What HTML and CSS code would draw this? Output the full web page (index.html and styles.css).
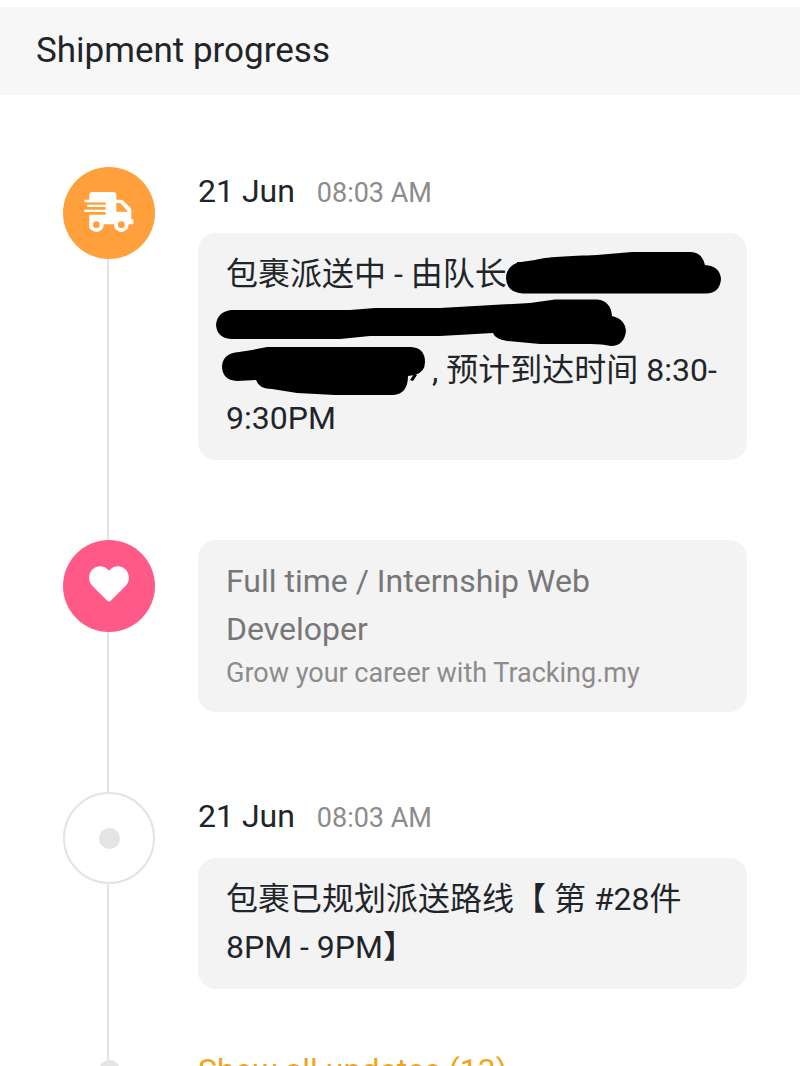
FILE: index.html
```html
<!DOCTYPE html>
<html lang="en">
<head>
  <meta charset="UTF-8">
  <meta name="viewport" content="width=device-width, initial-scale=1.0">
  <title>Shipment progress</title>
  <link rel="stylesheet" href="styles.css">
</head>
<body>
  <header class="page-header">
    <h1>Shipment progress</h1>
  </header>

  <ol class="timeline">
    <li class="step">
      <div class="rail">
        <span class="marker marker-truck">
          <svg width="51" height="42" viewBox="102 108 153 126" aria-hidden="true">
            <path fill="#fff" d="M118 139V117q0-9 9-9h63q9 0 9 9v14h13q5 0 8 3l20 20q4 4 4 9v27h6v15h-132V176h50V139z"/>
            <path fill="#fff" d="M103 131h66v8h-66zM112 146h57v7h-57zM103 161h66v7h-66zM167 131h8v50h-8z"/>
            <path fill="#ffa03c" d="M199 141h12l23 26h-35z"/>
            <circle cx="139" cy="206" r="16" fill="#ffa03c" stroke="#fff" stroke-width="12"/>
            <circle cx="214" cy="206" r="16" fill="#ffa03c" stroke="#fff" stroke-width="12"/>
          </svg>
        </span>
        <span class="line"></span>
      </div>
      <div class="content">
        <p class="date">21 Jun <time>08:03 AM</time></p>
        <div class="card" lang="zh">
          <p>包裹派送中 - 由队长<br><br><span class="hidden-name"></span>, 预计到达时间 8:30-9:30PM</p>
          <svg class="redaction" width="549" height="227" viewBox="198 233 549 227" aria-hidden="true">
            <path d="M521 262C512 263 506 270 506 278Q507 293 523 293.500H706Q720 293 721 279Q720 266 705 265Q702 252 690 252H632L597 255C570 256 545 257 535 260Z"/>
            <path d="M231 310H350L375 308H440L530 303L555 299.500H597Q611 301 612 316Q625 319 626 331Q624 346 611 346Q603 344 590 344H540L507 341Q495 339 493 333L440 336H370L340 339H231Q217 338 216 325Q217 312 231 310Z"/>
            <path d="M239 352L252 350L267 347H411Q425 348 425 362Q425 372 415 375L408 376Q408 394 393 395H335L297 393L272 389Q259 389 256 380L237 381Q222 380 222 366Q223 353 239 352Z"/>
            <path d="M417 375l-4 6-3-1 4-6zM517 262h5v3h-5z"/>
          </svg>
        </div>
      </div>
    </li>

    <li class="step">
      <div class="rail">
        <span class="marker marker-heart">
          <svg width="40" height="40" viewBox="0 0 40 40" aria-hidden="true">
            <path fill="#fff" d="M18 34.500L3.500 20C-1 15.500-1 8 3.500 3.500 8-.8 14.500-.8 18.500 3.200L20 4.700l1.500-1.500c4-4 10.500-4 15 .3 4.500 4.500 4.500 12 0 16.500L22 34.500q-2 2-4 0z"/>
          </svg>
        </span>
        <span class="line"></span>
      </div>
      <div class="content">
        <div class="card card-ad">
          <p>Full time / Internship Web Developer</p>
          <p class="note">Grow your career with Tracking.my</p>
        </div>
      </div>
    </li>

    <li class="step step-before-more">
      <div class="rail">
        <span class="marker marker-plain"><span class="dot"></span></span>
        <span class="line"></span>
      </div>
      <div class="content">
        <p class="date">21 Jun <time>08:03 AM</time></p>
        <div class="card" lang="zh">
          <p>包裹已规划派送路线【 第 #28件 8PM - 9PM】</p>
        </div>
      </div>
    </li>

    <li class="step step-more">
      <div class="rail">
        <span class="line"></span>
        <span class="dot"></span>
        <span class="line"></span>
      </div>
      <div class="content">
        <a class="show-all" href="#">Show all updates (13)</a>
      </div>
    </li>
  </ol>
</body>
</html>
```

FILE: styles.css
```css
* {
  box-sizing: border-box;
}
body {
  margin: 0;
  padding-top: 7px;
  font-family: Roboto, "Noto Sans CJK SC", sans-serif;
  font-size: 32px;
  line-height: 48px;
  color: #212529;
  background: #fff;
}
h1,
p {
  margin: 0;
}
.page-header {
  padding: 17px 36px;
  background: #f7f7f7;
}
h1 {
  font-size: 35px;
  font-weight: 400;
  line-height: 54px;
}
.timeline {
  margin: 0;
  padding: 72px 53px 0 63px;
  list-style: none;
}
.step {
  display: flex;
  gap: 43px;
}
.rail {
  display: flex;
  flex: none;
  flex-direction: column;
  align-items: center;
  width: 92px;
}
.line {
  flex: 1;
  width: 2px;
  margin-right: 2px;
  background: #e4e4e4;
}
.marker {
  display: flex;
  align-items: center;
  justify-content: center;
  width: 92px;
  height: 92px;
  border-radius: 50%;
}
.marker-truck {
  background: #ffa03c;
}
.marker-heart {
  background: #ff5a87;
}
.marker-plain {
  border: 2px solid #e4e4e4;
}
.dot {
  width: 21px;
  height: 21px;
  border-radius: 50%;
  background: #e4e4e4;
}
.content {
  flex: 1;
  min-width: 0;
  padding-bottom: 80px;
}
.step-before-more .content {
  padding-bottom: 57px;
}
.step-more .content {
  padding-bottom: 0;
}
.date {
  margin-bottom: 18px;
}
.date time {
  margin-left: 14px;
  font-size: 27px;
  line-height: 1;
  color: #8c8c8c;
}
.card {
  position: relative;
  padding: 17px 28px 18px;
  border-radius: 18px;
  background: #f3f3f3;
}
.card-ad {
  color: #777;
}
.note {
  font-size: 27px;
  line-height: 41px;
  color: #8c8c8c;
}
.hidden-name {
  display: inline-block;
  width: 206px;
}
/* marker strokes over the private details */
.redaction {
  position: absolute;
  top: 0;
  left: 0;
  fill: #000;
}
.show-all {
  color: #f0a51e;
  text-decoration: none;
}
```
